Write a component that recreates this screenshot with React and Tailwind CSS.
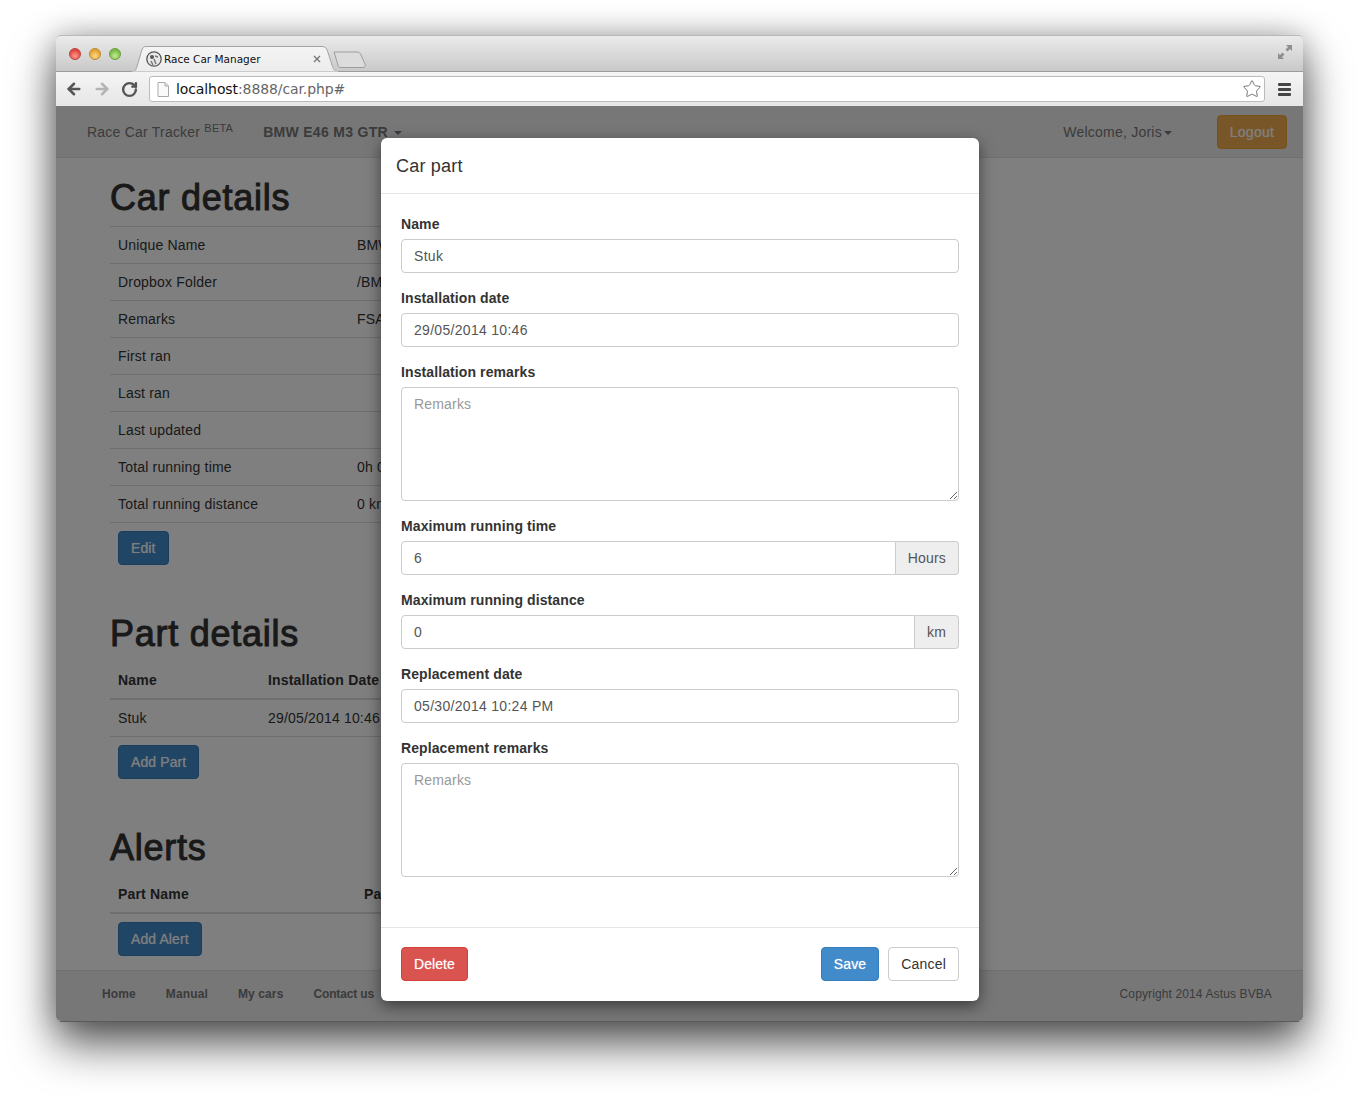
import { ArrowLeft, ArrowRight, RotateCw, Star } from 'lucide-react';

const carRows = [
  ['Unique Name', 'BMW E46 M3 GTR'],
  ['Dropbox Folder', '/BMW E46 M3 GTR'],
  ['Remarks', 'FSA'],
  ['First ran', ''],
  ['Last ran', ''],
  ['Last updated', ''],
  ['Total running time', '0h 0m'],
  ['Total running distance', '0 km'],
];

function Caret({ className = '' }) {
  return <span className={`inline-block h-0 w-0 border-x-4 border-t-4 border-x-transparent border-t-[#777] ${className}`} />;
}

function Heading({ children }) {
  return <h1 className="mb-[6px] text-[36px] leading-[44px] font-normal tracking-[0.75px] text-[#333] [-webkit-text-stroke:1px_#333]">{children}</h1>;
}

function PrimaryButton({ children }) {
  return (
    <button className="ml-2 h-[34px] rounded border border-[#357ebd] bg-[#428bca] px-3 text-sm tracking-[0.1px] text-white [text-shadow:0_0_1px_rgba(255,255,255,0.6)]">
      {children}
    </button>
  );
}

function Field({ label, children }) {
  return (
    <div className="mb-[15px]">
      <label className="mb-[5px] block text-sm leading-5 font-bold tracking-[0.1px] text-[#333]">{label}</label>
      {children}
    </div>
  );
}

function TextInput({ value, joined }) {
  return (
    <input
      readOnly
      value={value}
      className={`block h-[34px] w-full min-w-0 border border-[#ccc] bg-white px-3 text-sm tracking-[0.3px] text-[#555] outline-none ${joined ? 'rounded-l' : 'rounded'}`}
    />
  );
}

function AddonInput({ value, addon }) {
  return (
    <div className="flex">
      <TextInput value={value} joined />
      <span className="flex h-[34px] shrink-0 items-center rounded-r border border-l-0 border-[#ccc] bg-[#eee] px-3 text-sm text-[#555]">
        {addon}
      </span>
    </div>
  );
}

function Remarks() {
  return (
    <textarea
      readOnly
      placeholder="Remarks"
      className="block h-[114px] w-full rounded border border-[#ccc] bg-white px-3 py-[6px] text-sm leading-5 text-[#555] outline-none placeholder:text-[#999]"
    />
  );
}

function BrowserChrome() {
  return (
    <>
      <div className="relative flex h-[36px] shrink-0 rounded-t-[5px] border-t border-[#b8b8b8] bg-gradient-to-b from-[#ebebeb] to-[#c9c9c9]">
        <div className="mt-[12px] ml-[13px] flex gap-2 self-start">
          <span className="h-3 w-3 rounded-full border border-[#b8423c] bg-[radial-gradient(circle_at_50%_70%,#ff9a8e,#e0443e_70%)]" />
          <span className="h-3 w-3 rounded-full border border-[#bd8a2c] bg-[radial-gradient(circle_at_50%_70%,#ffd88a,#e0a030_70%)]" />
          <span className="h-3 w-3 rounded-full border border-[#6a9e3a] bg-[radial-gradient(circle_at_50%_70%,#c4ec8e,#78b84a_70%)]" />
        </div>
        <div className="relative mt-[10px] ml-[11px] h-[26px] w-[206px]">
          <svg width="206" height="26" viewBox="0 0 206 26" className="absolute inset-0">
            <defs>
              <linearGradient id="tabFill" x1="0" y1="0" x2="0" y2="1">
                <stop offset="0" stopColor="#f4f4f4" />
                <stop offset="1" stopColor="#ececec" />
              </linearGradient>
            </defs>
            <path d="M0 25.5C4 25.5 4.5 22 5.5 19L9.5 5C10.5 2 11.5 .5 14 .5H190C193 .5 194.5 2 195.5 5L200 19C201 22 202 25.5 206 25.5Z" fill="url(#tabFill)" stroke="#a3a3a3" />
            <path d="M0 26H206" stroke="#f2f2f2" />
          </svg>
          <svg width="16" height="16" viewBox="0 0 16 16" className="absolute top-[5px] left-[14px]">
            <circle cx="8" cy="8" r="7.2" fill="#e8e8e8" stroke="#555" strokeWidth="1.3" />
            <circle cx="6" cy="6" r="2" fill="#555" />
            <path d="M9 5l3 1M8 8l2 5M5 10l2 4" stroke="#777" strokeWidth="1.5" />
          </svg>
          <span className="absolute top-[5px] left-[32px] font-['DejaVu_Sans',sans-serif] text-[10.5px] leading-4 tracking-normal whitespace-nowrap text-[#111]">
            Race Car Manager
          </span>
          <svg width="8" height="8" viewBox="0 0 8 8" className="absolute top-[9px] left-[181px]">
            <path d="M1 1l6 6M7 1l-6 6" stroke="#777" strokeWidth="1.4" />
          </svg>
        </div>
        <svg width="34" height="18" viewBox="0 0 34 18" className="mt-[15px] -ml-[5px]">
          <path d="M1 1H24C26 1 27 2 28 4L32 13C33 15 32 16.5 30 16.5H8C6 16.5 5.5 16 5 14L1 1Z" fill="#dcdcdc" stroke="#9d9d9d" />
        </svg>
        <svg width="16" height="16" viewBox="0 0 16 16" className="absolute top-[8px] right-[10px]">
          <path d="M9 1H15V7L13 5L10.5 7.5L8.5 5.5L11 3Z" fill="#8f8f8f" />
          <path d="M1 9V15H7L5 13L7.5 10.5L5.5 8.5L3 11Z" fill="#8f8f8f" />
        </svg>
      </div>
      <div className="flex h-[35px] shrink-0 items-center border-t border-[#9c9c9c] bg-gradient-to-b from-[#f5f5f5] to-[#e6e6e6]">
        <ArrowLeft className="ml-[9px] h-[18px] w-[18px] text-[#555]" strokeWidth={3.4} />
        <ArrowRight className="ml-[10px] h-[18px] w-[18px] text-[#b4b4b4]" strokeWidth={3.4} />
        <RotateCw className="ml-[10px] h-[17px] w-[17px] text-[#555]" strokeWidth={3.4} />
        <div className="ml-[11px] flex h-[26px] w-[1116px] items-center rounded-[3px] border border-[#bbb] bg-white">
          <svg width="12" height="15" viewBox="0 0 12 15" className="ml-[7px]">
            <path d="M1 .5H8L11.5 4V14.5H1Z" fill="#fafafa" stroke="#aaa" />
            <path d="M8 .5V4H11.5" fill="none" stroke="#aaa" />
          </svg>
          <span className="ml-[7px] font-['DejaVu_Sans',sans-serif] text-sm tracking-[-0.1px] whitespace-nowrap text-[#111]">
            localhost<span className="text-[#666]">:8888/car.php#</span>
          </span>
          <Star className="mr-[2px] ml-auto h-[20px] w-[20px] text-[#777]" strokeWidth={1.2} />
        </div>
        <div className="ml-[13px] flex flex-col gap-[2px]">
          <span className="h-[3px] w-[13px] rounded-[1px] bg-[#444]" />
          <span className="h-[3px] w-[13px] rounded-[1px] bg-[#444]" />
          <span className="h-[3px] w-[13px] rounded-[1px] bg-[#444]" />
        </div>
      </div>
    </>
  );
}

function Page() {
  return (
    <div className="flex h-[915px] flex-col bg-white">
      <nav className="flex h-[52px] shrink-0 items-center border-b border-[#e0e0e0] bg-[#eeeeee] pr-[16px] pl-[31px] text-sm tracking-[0.22px] text-[#777]">
        <span>
          Race Car Tracker <sup className="relative -top-[5px] align-baseline text-[11px]">BETA</sup>
        </span>
        <span className="ml-[30px] font-bold tracking-[0.3px]">
          BMW E46 M3 GTR <Caret className="ml-[2px] align-middle" />
        </span>
        <span className="ml-auto">
          Welcome, Joris<Caret className="ml-[2px] align-middle" />
        </span>
        <button className="ml-[45px] h-[34px] rounded border border-[#eea236] bg-[#f0ad4e] px-3 text-white [text-shadow:0_0_1px_rgba(255,255,255,0.6)]">Logout</button>
      </nav>
      <main className="flex-1 pt-[18px] pl-[54px]">
        <div className="w-[800px]">
          <Heading>Car details</Heading>
          <table className="w-full border-b border-[#ddd] text-sm text-[#333]">
            <tbody>
              {carRows.map(([name, value]) => (
                <tr key={name} className="h-[37px] border-t border-[#ddd]">
                  <td className="w-[239px] px-2">{name}</td>
                  <td className="px-2">{value}</td>
                </tr>
              ))}
            </tbody>
          </table>
          <div className="mt-2">
            <PrimaryButton>Edit</PrimaryButton>
          </div>

          <div className="mt-[47px]">
            <Heading>Part details</Heading>
          </div>
          <table className="w-full text-sm text-[#333]">
            <thead>
              <tr className="h-[37px] border-b-2 border-[#ddd] text-left">
                <th className="w-[150px] px-2">Name</th>
                <th className="px-2">Installation Date</th>
              </tr>
            </thead>
            <tbody>
              <tr className="h-[37px] border-b border-[#ddd]">
                <td className="px-2">Stuk</td>
                <td className="px-2">29/05/2014 10:46</td>
              </tr>
            </tbody>
          </table>
          <div className="mt-2">
            <PrimaryButton>Add Part</PrimaryButton>
          </div>

          <div className="mt-[47px]">
            <Heading>Alerts</Heading>
          </div>
          <table className="w-full text-sm text-[#333]">
            <thead>
              <tr className="h-[37px] border-b-2 border-[#ddd] text-left">
                <th className="w-[246px] px-2">Part Name</th>
                <th className="px-2">Part Status</th>
              </tr>
            </thead>
          </table>
          <div className="mt-2">
            <PrimaryButton>Add Alert</PrimaryButton>
          </div>
        </div>
      </main>
      <footer className="flex h-[51px] shrink-0 items-center border-t border-[#e0e0e0] bg-[#eeeeee] pr-[31px] pb-[4px] pl-[46px] text-xs tracking-[0.12px] text-[#777]">
        <div className="flex gap-[30px] font-bold">
          <span>Home</span>
          <span>Manual</span>
          <span>My cars</span>
          <span className="tracking-[-0.15px]">Contact us</span>
        </div>
        <span className="ml-auto">Copyright 2014 Astus BVBA</span>
      </footer>
    </div>
  );
}

function PartModal() {
  return (
    <div className="absolute top-[32px] left-[325px] w-[598px] rounded-[6px] bg-white text-[#333] shadow-[0_5px_15px_rgba(0,0,0,0.5)]">
      <div className="flex h-[56px] items-center border-b border-[#e5e5e5] px-[15px] text-lg tracking-[0.2px]">Car part</div>
      <div className="px-5 pt-5 pb-[35px]">
        <Field label="Name">
          <TextInput value="Stuk" />
        </Field>
        <Field label="Installation date">
          <TextInput value="29/05/2014 10:46" />
        </Field>
        <Field label="Installation remarks">
          <Remarks />
        </Field>
        <Field label="Maximum running time">
          <AddonInput value="6" addon="Hours" />
        </Field>
        <Field label="Maximum running distance">
          <AddonInput value="0" addon="km" />
        </Field>
        <Field label="Replacement date">
          <TextInput value="05/30/2014 10:24 PM" />
        </Field>
        <Field label="Replacement remarks">
          <Remarks />
        </Field>
      </div>
      <div className="flex h-[74px] items-center border-t border-[#e5e5e5] px-5 pb-[1px] text-sm">
        <button className="h-[34px] rounded border border-[#d43f3a] bg-[#d9534f] px-3 tracking-[0.05px] text-white [text-shadow:0_0_1px_rgba(255,255,255,0.6)]">Delete</button>
        <button className="ml-auto h-[34px] rounded border border-[#357ebd] bg-[#428bca] px-3 text-white [text-shadow:0_0_1px_rgba(255,255,255,0.6)]">Save</button>
        <button className="ml-[9px] h-[34px] rounded border border-[#ccc] bg-white px-3 text-[#333]">Cancel</button>
      </div>
    </div>
  );
}

export default function App() {
  return (
    <div className="h-[1100px] overflow-hidden bg-white pt-[35px] pl-[56px] font-['Liberation_Sans',Arial,sans-serif] tracking-[0.18px]">
      <div className="w-[1247px] rounded-[5px] shadow-[0_22px_45px_rgba(0,0,0,0.65),0_0_30px_rgba(0,0,0,0.25)]">
        <BrowserChrome />
        <div className="relative overflow-hidden rounded-b-[5px] border-b border-[#5a5a5a]">
          <Page />
          <div className="absolute inset-0 bg-black/50" />
          <PartModal />
        </div>
      </div>
    </div>
  );
}
